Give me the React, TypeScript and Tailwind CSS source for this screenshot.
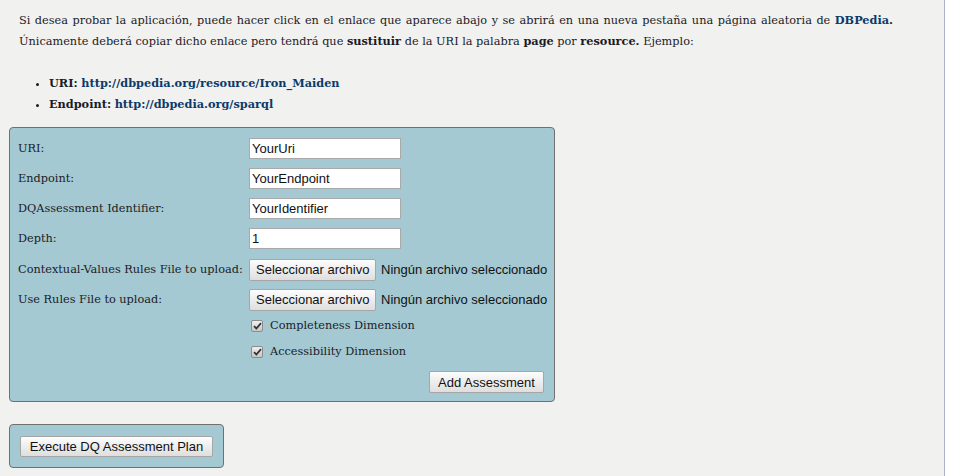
const serif = "[font-family:'DejaVu_Serif',serif]";
const sans = "[font-family:'Liberation_Sans',Arial,sans-serif]";

const textFields = [
  { label: "URI:", value: "YourUri" },
  { label: "Endpoint:", value: "YourEndpoint" },
  { label: "DQAssessment Identifier:", value: "YourIdentifier" },
  { label: "Depth:", value: "1" },
];

const fileFields = ["Contextual-Values Rules File to upload:", "Use Rules File to upload:"];

const dimensions = ["Completeness Dimension", "Accessibility Dimension"];

function OldButton({ children, className = "" }: { children: React.ReactNode; className?: string }) {
  return (
    <button
      className={`${sans} shrink-0 whitespace-nowrap rounded-[2px] border border-[#a6a6a6] bg-gradient-to-b from-[#fdfdfd] to-[#dedede] px-[6px] text-[13px] leading-none text-[#111] ${className}`}
    >
      {children}
    </button>
  );
}

function Check() {
  return (
    <span className="flex h-[12px] w-[12px] items-center justify-center rounded-[2px] border border-[#8c8c8c] bg-gradient-to-b from-[#f0f0f0] to-[#c6c6c6]">
      <svg width="9" height="8" viewBox="0 0 9 8">
        <path d="M1 4.2 L3.4 6.5 L8 1.2" fill="none" stroke="#333" strokeWidth="1.8" />
      </svg>
    </span>
  );
}

export default function App() {
  return (
    <div className="flex min-h-screen bg-white">
      <div className={`${serif} h-[476px] w-[945px] border-r border-[#aab2c6] bg-[#f1f1ef] pl-[19px] pt-[10px] text-[11.3px] text-[#1b1b27]`}>
        <p className="w-[874px] text-justify leading-[21px]">
          Si desea probar la aplicación, puede hacer click en el enlace que aparece abajo y se abrirá en una nueva
          pestaña una página aleatoria de <a className="font-bold text-[#0b3a6a]">DBPedia</a>
          <span className="font-bold">.</span> Únicamente deberá copiar dicho enlace pero tendrá que{" "}
          <b>sustituir</b> de la URI la palabra <b>page</b> por <b>resource.</b> Ejemplo:
        </p>

        <ul className="mt-[21px] list-disc pl-[30px] leading-[21px]">
          <li>
            <b>URI:</b> <a className="font-bold text-[#0b3a6a]">http://dbpedia.org/resource/Iron_Maiden</a>
          </li>
          <li>
            <b>Endpoint:</b> <a className="font-bold text-[#0b3a6a]">http://dbpedia.org/sparql</a>
          </li>
        </ul>

        <div className="-ml-[10px] mt-[12px] w-[546px] rounded-[4px] border border-[#707070] bg-[#a4c9d2] px-[8px] pb-[8px] pt-[10px]">
          <div className="flex flex-col gap-[9px]">
            {textFields.map((f) => (
              <div key={f.label} className="flex h-[21px] items-center">
                <span className="w-[231px] shrink-0 pt-px">{f.label}</span>
                <div className={`${sans} flex h-[21px] w-[152px] items-center border border-[#a9a9a9] bg-white px-[2px] text-[13px] text-[#111]`}>
                  {f.value}
                </div>
              </div>
            ))}
            {fileFields.map((label, i) => (
              <div key={label} className={`flex h-[21px] items-center ${i === 0 ? "mt-px" : ""}`}>
                <span className="w-[231px] shrink-0 whitespace-nowrap pt-px">{label}</span>
                <OldButton className="h-[22px] w-[127px]">Seleccionar archivo</OldButton>
                <span className={`${sans} ml-[5px] whitespace-nowrap text-[13px] text-[#111]`}>Ningún archivo seleccionado</span>
              </div>
            ))}
          </div>

          <div className="mt-[3px] flex flex-col pl-[233px]">
            {dimensions.map((d) => (
              <label key={d} className="flex h-[26px] items-center gap-[7px]">
                <Check />
                {d}
              </label>
            ))}
          </div>

          <div className="mt-[6px] flex justify-end pr-[2px]">
            <OldButton className="h-[22px] w-[115px]">Add Assessment</OldButton>
          </div>
        </div>

        <div className="-ml-[10px] mt-[22px] inline-block rounded-[4px] border border-[#707070] bg-[#a4c9d2] pb-[10px] pl-[10px] pr-[10px] pt-[11px]">
          <OldButton className="h-[21px] w-[193px]">Execute DQ Assessment Plan</OldButton>
        </div>
      </div>
    </div>
  );
}
